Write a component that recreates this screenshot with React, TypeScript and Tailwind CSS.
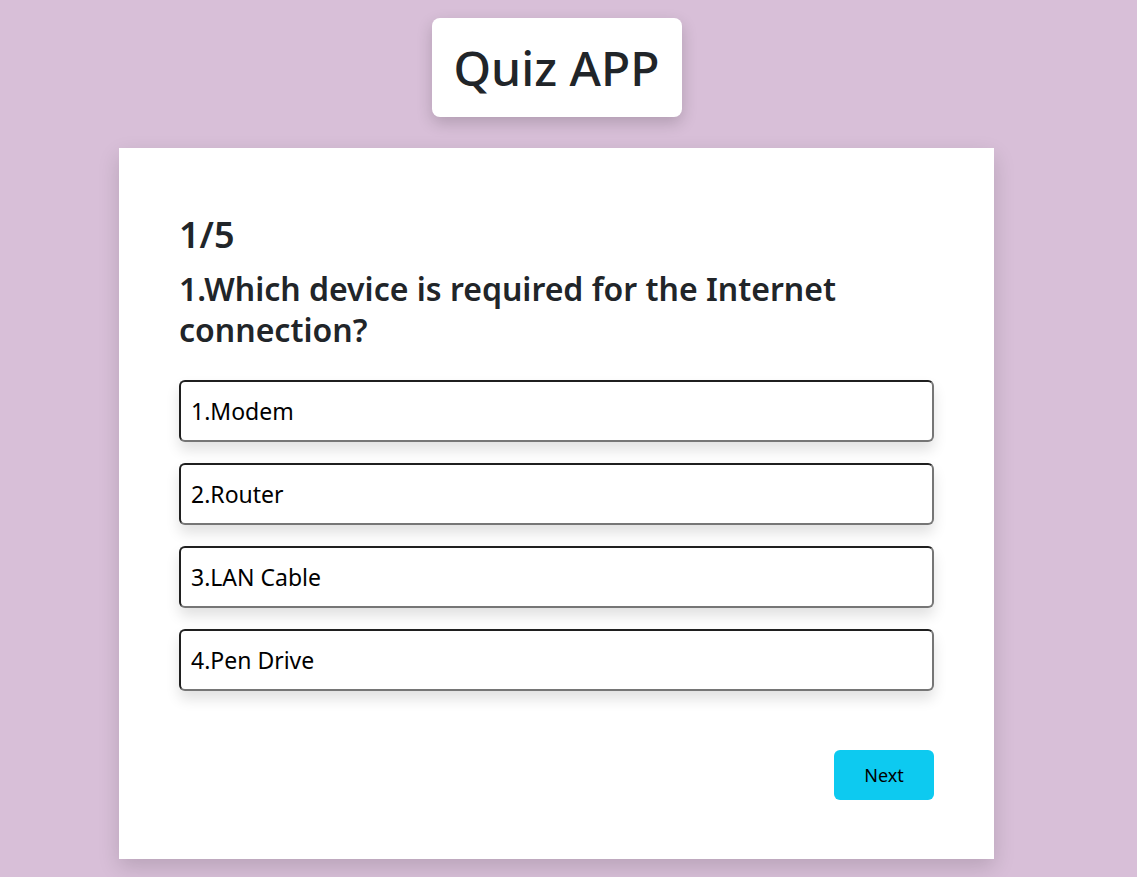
const options = ['1.Modem', '2.Router', '3.LAN Cable', '4.Pen Drive'];

export default function App() {
  return (
    <div className="min-h-[877px] bg-[#d8bfd8] pr-[24px] pt-[18px] font-['Segoe_UI','Noto_Sans',sans-serif] text-[#212529]">
      <div className="flex justify-center">
        <h1 className="flex h-[99px] w-[250px] items-center justify-center rounded-lg bg-white text-[48px] font-medium shadow-[0_6px_16px_rgba(0,0,0,0.18)]">
          Quiz APP
        </h1>
      </div>
      <div className="mx-auto mt-[31px] h-[711px] w-[875px] bg-white px-[60px] pt-[65px] shadow-[0_8px_20px_rgba(0,0,0,0.15)]">
        <h2 className="text-[36px] font-semibold leading-[1.2]">1/5</h2>
        <h3 className="mt-[12px] text-[32px] font-semibold leading-[41px]">
          1.Which device is required for the Internet connection?
        </h3>
        <div className="mt-[30px] flex flex-col gap-[21px]">
          {options.map((opt) => (
            <button
              key={opt}
              className="flex h-[62px] w-full items-center rounded-md border-2 border-t-[#1f1f1f] border-l-[#1f1f1f] border-b-[#767676] border-r-[#767676] bg-white px-[10px] text-left text-[23px] text-black shadow-[0_8px_14px_rgba(0,0,0,0.12)]"
            >
              {opt}
            </button>
          ))}
        </div>
        <div className="mt-[59px] flex justify-end">
          <button className="h-[50px] w-[100px] rounded-md bg-[#0dcaf0] text-[18px] text-black">Next</button>
        </div>
      </div>
    </div>
  );
}
